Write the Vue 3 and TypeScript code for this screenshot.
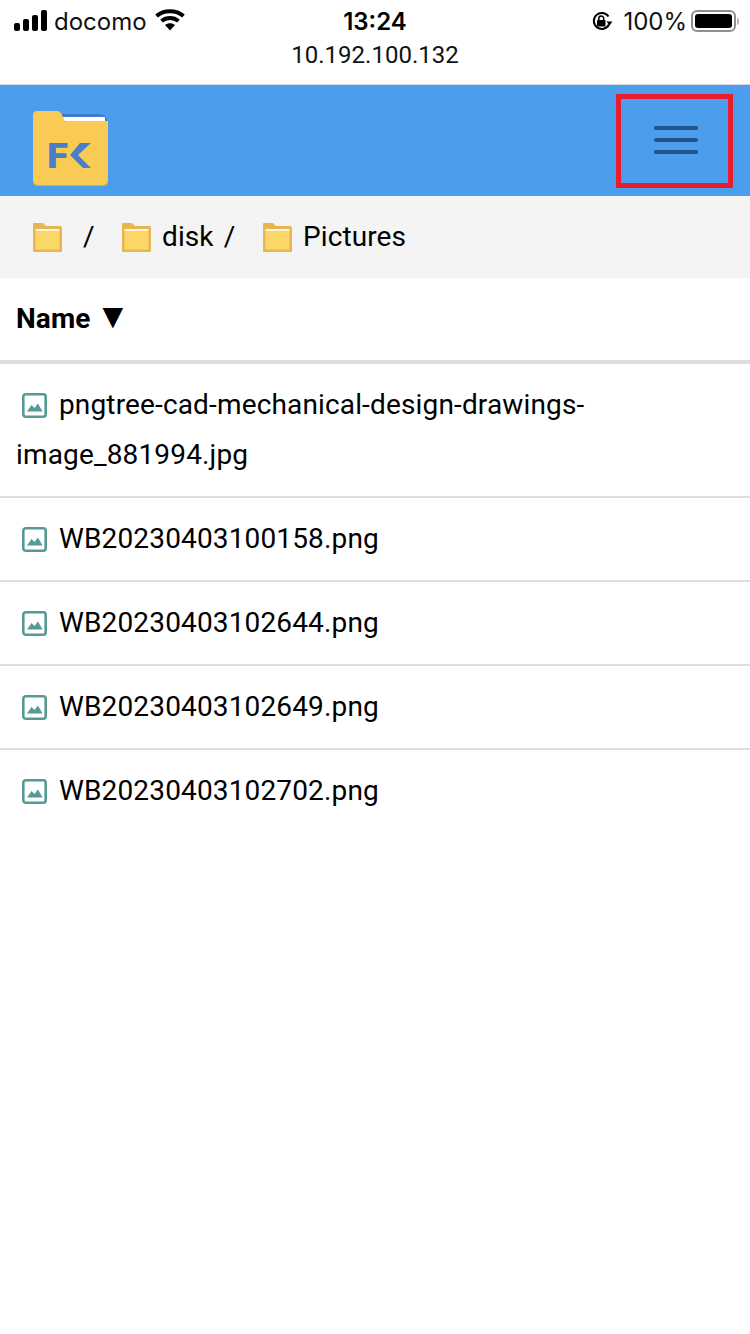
<script setup lang="ts">
const crumbs = [
  { name: '', sep: true },
  { name: 'disk', sep: true },
  { name: 'Pictures', sep: false },
]
const files = [
  'pngtree-cad-mechanical-design-drawings-image_881994.jpg',
  'WB20230403100158.png',
  'WB20230403102644.png',
  'WB20230403102649.png',
  'WB20230403102702.png',
]
</script>

<template>
  <div class="page">
    <div class="status">
      <div class="status-row">
        <div class="status-left">
          <svg class="signal" width="34" height="22" viewBox="0 0 34 22">
            <rect x="0" y="13" width="6" height="8" rx="2" fill="#000" />
            <rect x="9" y="9" width="6" height="12" rx="2" fill="#000" />
            <rect x="18" y="5" width="6" height="16" rx="2" fill="#000" />
            <rect x="27" y="0" width="6" height="21" rx="2" fill="#000" />
          </svg>
          <span class="carrier">docomo</span>
          <svg class="wifi" width="30" height="22" viewBox="0 0 30 22">
            <path d="M1.500 7C9 0.500 21 0.500 28.500 7" fill="none" stroke="#000" stroke-width="4" />
            <path d="M6.500 12C11.500 8 18.500 8 23.500 12" fill="none" stroke="#000" stroke-width="4" />
            <path d="M10 16C13 13.500 17 13.500 20 16L15 21.500Z" fill="#000" />
          </svg>
        </div>
        <div class="time">13:24</div>
        <div class="status-right">
          <svg class="lock" width="22" height="22" viewBox="0 0 22 22">
            <path d="M18 14.500A8 8 0 1 1 17.500 6.500" fill="none" stroke="#000" stroke-width="2" />
            <path d="M15.500 11.500H21.500L18.500 15.500Z" fill="#000" />
            <rect x="6" y="10" width="8.500" height="6.500" rx="1" fill="#000" />
            <path d="M7.800 10.500V8.500a2.450 2.450 0 0 1 4.900 0v2" fill="none" stroke="#000" stroke-width="1.500" />
          </svg>
          <span class="percent">100%</span>
          <span class="battery"><span class="battery-fill"></span></span>
          <span class="battery-tip"></span>
        </div>
      </div>
      <div class="address">10.192.100.132</div>
    </div>

    <header class="topbar">
      <svg class="logo" width="76" height="76" viewBox="0 0 76 76">
        <path d="M24 4H66Q73 4 74 10V20H24Z" fill="#3f7bd0" />
        <rect x="26" y="7" width="46" height="9" fill="#fff" />
        <path d="M4 1H24Q27 1 28.5 4L32 11H75V70Q75 75 70 75H5Q0 75 0 70V5Q0 1 4 1Z" fill="#f9cb55" />
        <path d="M0 71Q0 75 5 75H70Q75 75 75 71V72Q75 76 70 76H5Q0 76 0 72Z" fill="#d5ab58" />
        <text x="14" y="58" class="logo-f" textLength="21" lengthAdjust="spacingAndGlyphs">F</text>
        <polygon points="58,33 47,33 37,45 50,58 58,58 45,45" fill="#4a7fc8" />
      </svg>
      <button class="menu" type="button" aria-label="Menu">
        <span class="bar"></span>
        <span class="bar"></span>
        <span class="bar"></span>
      </button>
    </header>

    <nav class="crumbs">
      <div v-for="(c, i) in crumbs" :key="i" class="crumb">
        <svg class="folder" width="29" height="29" viewBox="0 0 29 29">
          <path d="M1 0H10L13 3H27.500Q29 3 29 4.500V28Q29 29 28 29H1Q0 29 0 28V1Q0 0 1 0Z" fill="#e8b64f" />
          <rect x="2.500" y="6" width="24" height="2" fill="#fff5d8" />
          <rect x="2.500" y="8" width="24" height="18.500" fill="#fcd667" />
        </svg>
        <span v-if="c.name" class="crumb-name">{{ c.name }}</span>
        <span v-if="c.sep" class="sep">/</span>
      </div>
    </nav>

    <div class="table-head"><span>Name <span class="arrow">▼</span></span></div>

    <ul class="list">
      <li v-for="f in files" :key="f" class="row">
        <svg class="file-icon" width="25" height="25" viewBox="0 0 25 25">
          <rect x="1.300" y="1.300" width="22.400" height="22.400" rx="2.500" fill="none" stroke="#559b93" stroke-width="2.600" />
          <path d="M5 18.500L9.500 12L12.500 15L16 10.500L20.500 18.500Z" fill="#559b93" />
        </svg>
        <span class="file-name">{{ f }}</span>
      </li>
    </ul>
  </div>
</template>

<style>
html, body { margin: 0; background: #fff; }
</style>

<style scoped>
.page {
  width: 750px;
  min-height: 1334px;
  background: #fff;
  font-family: Roboto, "Liberation Sans", sans-serif;
  color: #000;
}
.status {
  height: 85px;
  box-sizing: border-box;
  padding-top: 6px;
  font-family: Inter, "Liberation Sans", sans-serif;
  border-bottom: 1px solid #d4d8dc;
}
.status-row {
  position: relative;
  display: flex;
  justify-content: space-between;
  align-items: center;
  height: 30px;
  padding: 0 13px;
}
.status-left, .status-right {
  display: flex;
  align-items: center;
}
.signal { margin-left: 1px; }
.carrier {
  font-size: 24px;
  margin-left: 6px;
  color: #111;
}
.wifi { margin-left: 8px; margin-top: -2px; }
.time {
  position: absolute;
  left: 0;
  right: 0;
  text-align: center;
  font-size: 24px;
  font-weight: 600;
}
.status-right {
  margin-right: -2px;
}
.percent {
  font-size: 24px;
  margin-left: 10px;
  color: #111;
}
.battery {
  box-sizing: border-box;
  width: 45px;
  height: 22px;
  margin-left: 4px;
  border: 2px solid #8f8f8f;
  border-radius: 6px;
  padding: 2px;
  display: block;
}
.battery-fill {
  display: block;
  height: 100%;
  background: #000;
  border-radius: 3px;
}
.battery-tip {
  width: 2px;
  height: 7px;
  margin-left: 1px;
  background: #b5b5b5;
  border-radius: 0 2px 2px 0;
}
.address {
  text-align: center;
  font-family: Roboto, sans-serif;
  font-size: 24px;
  line-height: 30px;
  margin-top: 4px;
  color: #111;
}
.topbar {
  height: 111px;
  background: #4c9deb;
  display: flex;
  justify-content: space-between;
  align-items: center;
  padding: 0 17px 0 33px;
}
.logo {
  margin-top: 14px;
}
.logo-f {
  font-family: Roboto, sans-serif;
  font-size: 35px;
  font-weight: 900;
  fill: #4a7fc8;
}
.menu {
  box-sizing: border-box;
  width: 117px;
  height: 94px;
  margin-top: 0;
  border: 5px solid #ea1c2d;
  background: transparent;
  padding: 0 0 2px 3px;
  display: flex;
  flex-direction: column;
  align-items: center;
  justify-content: center;
  gap: 8px;
}
.bar {
  display: block;
  width: 44px;
  height: 4px;
  border-radius: 2px;
  background: #20558c;
}
.crumbs {
  height: 82px;
  box-sizing: border-box;
  background: #f4f4f4;
  display: flex;
  align-items: center;
  padding: 0 0 2px 33px;
  font-size: 28px;
  color: #000;
}
.crumb {
  display: flex;
  align-items: center;
}
.crumb:nth-child(1) { width: 89px; }
.crumb:nth-child(2) { width: 141px; }
.folder { margin-top: 2px; }
.crumb-name { margin-left: 11px; letter-spacing: 0.1px; }
.sep { margin-left: 10px; }
.crumb:first-child .sep { margin-left: 21px; }
.table-head {
  box-sizing: border-box;
  display: flex;
  align-items: center;
  padding: 0 0 2px 16px;
  font-size: 28px;
  font-weight: 700;
  letter-spacing: 0.1px;
  border-bottom: 4px solid #ddd;
  height: 86px;
}
.arrow {
  font-size: 35px;
  line-height: 28px;
  margin-left: -2px;
}
.list {
  list-style: none;
  margin: 0;
  padding: 0;
}
.row {
  box-sizing: border-box;
  padding: 16px 150px 16px 16px;
  line-height: 50px;
  font-size: 28px;
  letter-spacing: 0.15px;
  border-bottom: 2px solid #ddd;
  color: #000;
}
.row:last-child { border-bottom: 0; }
.file-icon {
  vertical-align: -4px;
  margin: 0 12px 0 6px;
}
</style>
